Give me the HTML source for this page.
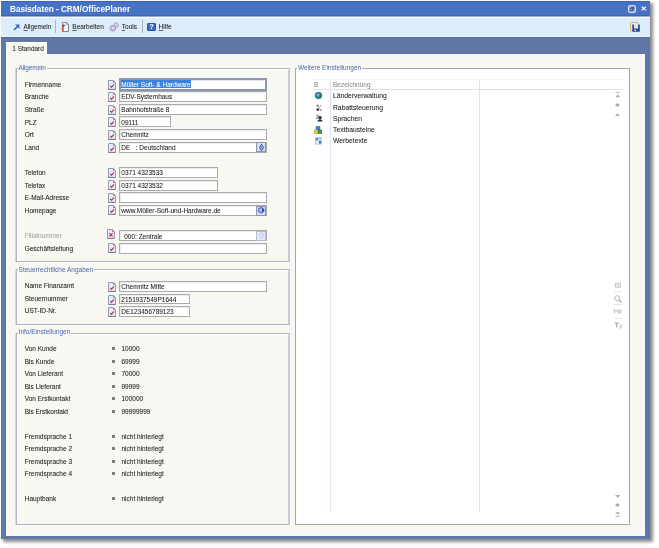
<!DOCTYPE html><html><head><meta charset="utf-8"><style>
html,body{margin:0;padding:0;background:#fff;width:659px;height:548px;overflow:hidden;font-family:"Liberation Sans",sans-serif;}
.a{position:absolute;box-sizing:border-box;}
.t{position:absolute;font-size:6.5px;line-height:8px;white-space:nowrap;color:#202020;-webkit-text-stroke:0.06px currentColor;}
.g{position:absolute;font-size:6.5px;line-height:8px;white-space:nowrap;color:#4867b0;background:#f8f7f1;padding:0 1px 0 1px;}
.in{position:absolute;box-sizing:border-box;background:#fff;border:1px solid #ababab;box-shadow:inset 1px 1px 0 #ececec;}
.gb{position:absolute;box-sizing:border-box;border:1px solid #b1b5c1;border-right-color:#bec4d1;box-shadow:inset 1px 1px 0 #fff, inset -1px 0 0 #c9ceda, 1px 1px 0 #fdfdfd, -1px 0 0 #d3d6dd;}
svg{position:absolute;overflow:visible;}
u{text-decoration-thickness:0.6px;text-underline-offset:1px;text-decoration-color:#666;}
#root{position:absolute;left:0;top:0;width:659px;height:548px;will-change:transform;}
</style></head><body><div id="root">
<div class="a" style="left:2.00px;top:2.00px;width:648.00px;height:537.00px;box-shadow:2px 2px 3px 1px rgba(0,0,0,0.45);"></div>
<div class="a" style="left:1.00px;top:1.00px;width:649.00px;height:538.00px;background:#5f78a7;"></div>
<div class="a" style="left:1.00px;top:1.00px;width:649.00px;height:15.00px;background:#4773c4;border-top:1px solid #3e62b4;border-bottom:1px solid #3f63b0;"></div>
<div class="a" style="left:10px;top:4px;font-size:8.2px;line-height:11px;font-weight:bold;color:#fff;white-space:nowrap;">Basisdaten - CRM/OfficePlaner</div>
<svg style="left:628.00px;top:5.00px" width="8" height="8" viewBox="0 0 8 8"><rect x="0.5" y="0.5" width="7" height="7" rx="1.3" fill="#9bb2e2" stroke="#d2def6" stroke-width="1"/><path d="M3.2 2.2H5.8V4.8" fill="none" stroke="#2c3f70" stroke-width="0.8"/><rect x="2.2" y="3.2" width="2.6" height="2.6" fill="none" stroke="#2c3f70" stroke-width="0.8"/></svg>
<svg style="left:640.50px;top:6.00px" width="5.5" height="5" viewBox="0 0 5.5 5"><path d="M0.6 0.6L4.9 4.4M4.9 0.6L0.6 4.4" stroke="#fff" stroke-width="1.25"/></svg>
<div class="a" style="left:1.00px;top:16.00px;width:649.00px;height:1.00px;background:#98aace;"></div>
<div class="a" style="left:1.00px;top:17.00px;width:649.00px;height:20.00px;background:#deedfc;border-top:1px solid #f6fbff;border-bottom:1px solid #f0f7fe;"></div>
<div class="a" style="left:1.00px;top:37.00px;width:649.00px;height:1.00px;background:#52699a;"></div>
<svg style="left:12.50px;top:23.50px" width="7" height="7" viewBox="0 0 7 7"><path d="M1 6L5.5 1.5" stroke="#3a62b4" stroke-width="1.6"/><path d="M2 0.5H6.5V5Z" fill="#3f69bd"/></svg>
<div class="t" style="left:23.50px;top:23.35px;color:#222;font-size:6.3px;"><u>A</u>llgemein</div>
<div class="a" style="left:55.00px;top:19.50px;width:1.00px;height:13.00px;background:#a9b4c6;"></div>
<svg style="left:61.00px;top:21.50px" width="8" height="10.5" viewBox="0 0 8 10.5"><path d="M1.5 0.5H5.5L7.5 2.5V9.5H1.5Z" fill="#f4f6fa" stroke="#6f7d95" stroke-width="0.9"/><path d="M5.5 0.5V2.5H7.5" fill="none" stroke="#6f7d95" stroke-width="0.7"/><path d="M0.8 3H2.8V8.8L1.8 10.3L0.8 8.8Z" fill="#c9603a"/><circle cx="2.8" cy="3.4" r="1" fill="#3a3a3a"/></svg>
<div class="t" style="left:72.30px;top:23.35px;color:#222;"><u>B</u>earbeiten</div>
<svg style="left:109.00px;top:22.00px" width="10.5" height="10" viewBox="0 0 10.5 10"><circle cx="7.2" cy="3" r="2.3" fill="#c9c2de" stroke="#a69dc4" stroke-width="1.1" stroke-dasharray="1 0.8"/><circle cx="7.2" cy="3" r="0.8" fill="#eeeaf6"/><circle cx="3.8" cy="6.2" r="2.9" fill="#c2bad9" stroke="#9d94bf" stroke-width="1.2" stroke-dasharray="1.1 0.9"/><circle cx="3.8" cy="6.2" r="1" fill="#efecf7"/></svg>
<div class="t" style="left:121.80px;top:23.35px;color:#222;"><u>T</u>ools</div>
<div class="a" style="left:141.50px;top:19.50px;width:1.00px;height:13.00px;background:#a9b4c6;"></div>
<div class="a" style="left:147.30px;top:22.60px;width:8.70px;height:8.40px;background:#3d6cc2;border-radius:1px;border:0.5px solid #2d55a0;"></div>
<div class="a" style="left:147.3px;top:22.4px;width:8.7px;text-align:center;font-size:7.5px;line-height:9px;font-weight:bold;color:#fff;">?</div>
<div class="t" style="left:158.60px;top:23.35px;color:#222;"><u>H</u>ilfe</div>
<svg style="left:630.00px;top:22.00px" width="10" height="10" viewBox="0 0 10 10"><rect x="0.5" y="0.5" width="7.6" height="8.6" rx="1" fill="none" stroke="#d4b35e" stroke-width="1"/><path d="M2.3 2.4H9.8V9.8H2.3Z" fill="#e6e2f6"/><path d="M2.3 2.4H4V9.8H2.3ZM8.1 2.4H9.8V9.8H8.1ZM4 6.6H8.1V9.8H4Z" fill="#2d4891"/><rect x="4.6" y="7.6" width="1.4" height="1.4" fill="#f2f2fa"/></svg>
<div class="a" style="left:6.00px;top:42.00px;width:41.00px;height:13.00px;background:#f8f7f1;border-top:1px solid #fff;border-left:1px solid #fff;"></div>
<div class="t" style="left:12.30px;top:44.55px;color:#222;font-size:6.45px;">1 Standard</div>
<div class="a" style="left:6.00px;top:54.00px;width:639.00px;height:482.00px;background:#f8f7f1;border-left:1px solid #fff;border-right:1px solid #fbfbfb;border-bottom:1px solid #fbfbfb;"></div>
<div class="gb" style="left:16.00px;top:68.00px;width:274.00px;height:194.00px;"></div>
<div class="g" style="left:17.60px;top:63.55px;font-size:6.5px;letter-spacing:-0.15px;">Allgemein</div>
<div class="gb" style="left:16.00px;top:269.00px;width:274.00px;height:56.00px;"></div>
<div class="g" style="left:17.60px;top:265.75px;">Steuerrechtliche Angaben</div>
<div class="gb" style="left:16.00px;top:333.00px;width:274.00px;height:192.00px;"></div>
<div class="g" style="left:17.60px;top:328.25px;">Info/Einstellungen</div>
<div class="t" style="left:24.70px;top:80.85px;">Firmenname</div>
<svg style="left:108.00px;top:79.60px" width="8" height="10" viewBox="0 0 8 10"><path d="M0.5 0.5H5.2L7.5 2.8V9.5H0.5Z" fill="#e9ecf8" stroke="#8593ad" stroke-width="0.9"/><path d="M5.2 0.5V2.8H7.5Z" fill="#66748f"/><path d="M0.5 9.4H7.5" stroke="#6b7891" stroke-width="0.9"/><path d="M2.3 5.9L3.5 7.3L5.9 4.4" fill="none" stroke="#c42a48" stroke-width="1.15"/></svg>
<div class="a" style="left:118.50px;top:78.00px;width:148.20px;height:13.00px;background:#fff;border:2px solid #8a97b3;box-shadow:inset 1px 1px 0 #dfe6f4;"></div>
<div class="a" style="left:121.00px;top:80.40px;width:69.80px;height:7.50px;background:#3b82da;"></div>
<div class="t" style="left:121.30px;top:80.75px;color:#fff;">Müller Soft- &amp; Hardware</div>
<div class="t" style="left:24.70px;top:93.45px;">Branche</div>
<svg style="left:108.00px;top:92.18px" width="8" height="10" viewBox="0 0 8 10"><path d="M0.5 0.5H5.2L7.5 2.8V9.5H0.5Z" fill="#e9ecf8" stroke="#8593ad" stroke-width="0.9"/><path d="M5.2 0.5V2.8H7.5Z" fill="#66748f"/><path d="M0.5 9.4H7.5" stroke="#6b7891" stroke-width="0.9"/><path d="M2.3 5.9L3.5 7.3L5.9 4.4" fill="none" stroke="#c42a48" stroke-width="1.15"/></svg>
<div class="in" style="left:118.50px;top:91.07px;width:148.20px;height:11.00px;"></div>
<div class="t" style="left:121.30px;top:93.42px;">EDV-Systemhaus</div>
<div class="t" style="left:24.70px;top:106.05px;">Straße</div>
<svg style="left:108.00px;top:104.76px" width="8" height="10" viewBox="0 0 8 10"><path d="M0.5 0.5H5.2L7.5 2.8V9.5H0.5Z" fill="#e9ecf8" stroke="#8593ad" stroke-width="0.9"/><path d="M5.2 0.5V2.8H7.5Z" fill="#66748f"/><path d="M0.5 9.4H7.5" stroke="#6b7891" stroke-width="0.9"/><path d="M2.3 5.9L3.5 7.3L5.9 4.4" fill="none" stroke="#c42a48" stroke-width="1.15"/></svg>
<div class="in" style="left:118.50px;top:103.74px;width:148.20px;height:11.00px;"></div>
<div class="t" style="left:121.30px;top:106.09px;">Bahnhofstraße 8</div>
<div class="t" style="left:24.70px;top:118.65px;">PLZ</div>
<svg style="left:108.00px;top:117.34px" width="8" height="10" viewBox="0 0 8 10"><path d="M0.5 0.5H5.2L7.5 2.8V9.5H0.5Z" fill="#e9ecf8" stroke="#8593ad" stroke-width="0.9"/><path d="M5.2 0.5V2.8H7.5Z" fill="#66748f"/><path d="M0.5 9.4H7.5" stroke="#6b7891" stroke-width="0.9"/><path d="M2.3 5.9L3.5 7.3L5.9 4.4" fill="none" stroke="#c42a48" stroke-width="1.15"/></svg>
<div class="in" style="left:118.50px;top:116.41px;width:52.10px;height:11.00px;"></div>
<div class="t" style="left:121.30px;top:118.76px;">09111</div>
<div class="t" style="left:24.70px;top:131.25px;">Ort</div>
<svg style="left:108.00px;top:129.92px" width="8" height="10" viewBox="0 0 8 10"><path d="M0.5 0.5H5.2L7.5 2.8V9.5H0.5Z" fill="#e9ecf8" stroke="#8593ad" stroke-width="0.9"/><path d="M5.2 0.5V2.8H7.5Z" fill="#66748f"/><path d="M0.5 9.4H7.5" stroke="#6b7891" stroke-width="0.9"/><path d="M2.3 5.9L3.5 7.3L5.9 4.4" fill="none" stroke="#c42a48" stroke-width="1.15"/></svg>
<div class="in" style="left:118.50px;top:129.08px;width:148.20px;height:11.00px;"></div>
<div class="t" style="left:121.30px;top:131.43px;">Chemnitz</div>
<div class="t" style="left:24.70px;top:143.85px;">Land</div>
<svg style="left:108.00px;top:142.50px" width="8" height="10" viewBox="0 0 8 10"><path d="M0.5 0.5H5.2L7.5 2.8V9.5H0.5Z" fill="#e9ecf8" stroke="#8593ad" stroke-width="0.9"/><path d="M5.2 0.5V2.8H7.5Z" fill="#66748f"/><path d="M0.5 9.4H7.5" stroke="#6b7891" stroke-width="0.9"/><path d="M2.3 5.9L3.5 7.3L5.9 4.4" fill="none" stroke="#c42a48" stroke-width="1.15"/></svg>
<div class="in" style="left:118.50px;top:141.75px;width:148.20px;height:11.00px;"></div>
<div class="a" style="left:256.20px;top:142.25px;width:10.00px;height:10.00px;background:#d0dcf8;border:1px solid #8c95ad;"></div>
<svg style="left:258.70px;top:143.75px" width="5" height="7" viewBox="0 0 5 7"><path d="M2.5 0.3L4.5 3.5L2.5 6.7L0.5 3.5Z" fill="#8fa7e0" stroke="#3552a0" stroke-width="0.9"/></svg>
<div class="t" style="left:121.30px;top:144.10px;">DE &nbsp;&nbsp;: Deutschland</div>
<div class="t" style="left:24.70px;top:169.05px;">Telefon</div>
<svg style="left:108.00px;top:167.66px" width="8" height="10" viewBox="0 0 8 10"><path d="M0.5 0.5H5.2L7.5 2.8V9.5H0.5Z" fill="#e9ecf8" stroke="#8593ad" stroke-width="0.9"/><path d="M5.2 0.5V2.8H7.5Z" fill="#66748f"/><path d="M0.5 9.4H7.5" stroke="#6b7891" stroke-width="0.9"/><path d="M2.3 5.9L3.5 7.3L5.9 4.4" fill="none" stroke="#c42a48" stroke-width="1.15"/></svg>
<div class="in" style="left:118.50px;top:167.09px;width:99.90px;height:11.00px;"></div>
<div class="t" style="left:121.30px;top:169.44px;">0371 4323533</div>
<div class="t" style="left:24.70px;top:181.65px;">Telefax</div>
<svg style="left:108.00px;top:180.24px" width="8" height="10" viewBox="0 0 8 10"><path d="M0.5 0.5H5.2L7.5 2.8V9.5H0.5Z" fill="#e9ecf8" stroke="#8593ad" stroke-width="0.9"/><path d="M5.2 0.5V2.8H7.5Z" fill="#66748f"/><path d="M0.5 9.4H7.5" stroke="#6b7891" stroke-width="0.9"/><path d="M2.3 5.9L3.5 7.3L5.9 4.4" fill="none" stroke="#c42a48" stroke-width="1.15"/></svg>
<div class="in" style="left:118.50px;top:179.76px;width:99.90px;height:11.00px;"></div>
<div class="t" style="left:121.30px;top:182.11px;">0371 4323532</div>
<div class="t" style="left:24.70px;top:194.25px;">E-Mail-Adresse</div>
<svg style="left:108.00px;top:192.82px" width="8" height="10" viewBox="0 0 8 10"><path d="M0.5 0.5H5.2L7.5 2.8V9.5H0.5Z" fill="#e9ecf8" stroke="#8593ad" stroke-width="0.9"/><path d="M5.2 0.5V2.8H7.5Z" fill="#66748f"/><path d="M0.5 9.4H7.5" stroke="#6b7891" stroke-width="0.9"/><path d="M2.3 5.9L3.5 7.3L5.9 4.4" fill="none" stroke="#c42a48" stroke-width="1.15"/></svg>
<div class="in" style="left:118.50px;top:192.43px;width:148.20px;height:11.00px;"></div>
<div class="t" style="left:24.70px;top:206.85px;">Homepage</div>
<svg style="left:108.00px;top:205.40px" width="8" height="10" viewBox="0 0 8 10"><path d="M0.5 0.5H5.2L7.5 2.8V9.5H0.5Z" fill="#e9ecf8" stroke="#8593ad" stroke-width="0.9"/><path d="M5.2 0.5V2.8H7.5Z" fill="#66748f"/><path d="M0.5 9.4H7.5" stroke="#6b7891" stroke-width="0.9"/><path d="M2.3 5.9L3.5 7.3L5.9 4.4" fill="none" stroke="#c42a48" stroke-width="1.15"/></svg>
<div class="in" style="left:118.50px;top:205.10px;width:148.20px;height:11.00px;"></div>
<div class="a" style="left:256.20px;top:205.60px;width:10.00px;height:10.00px;background:#d0dcf8;border:1px solid #8c95ad;"></div>
<svg style="left:258.00px;top:207.30px" width="7" height="6.5" viewBox="0 0 7 6.5"><circle cx="3" cy="3.25" r="2.7" fill="#7d9be6" stroke="#3e5cb0" stroke-width="0.8"/><path d="M4 0.9L6.8 3.25L4 5.6Z" fill="#2f4d9f"/><path d="M1.6 2.4H3.8M1.6 4.1H3.8" stroke="#d8e6ff" stroke-width="0.9"/></svg>
<div class="t" style="left:121.30px;top:207.45px;">www.Müller-Soft-und-Hardware.de</div>
<div class="t" style="left:24.70px;top:232.05px;color:#a4a4a4;">Filialnummer</div>
<svg style="left:107.20px;top:229.36px" width="8" height="10" viewBox="0 0 8 10"><path d="M0.5 0.5H5.2L7.5 2.8V9.5H0.5Z" fill="#e9ecf8" stroke="#8593ad" stroke-width="0.9"/><path d="M5.2 0.5V2.8H7.5Z" fill="#66748f"/><path d="M0.5 9.4H7.5" stroke="#6b7891" stroke-width="0.9"/><path d="M2.4 4.2L5.6 7.6M5.6 4.2L2.4 7.6" stroke="#d8283a" stroke-width="1.2"/></svg>
<div class="in" style="left:118.50px;top:230.44px;width:148.20px;height:11.00px;"></div>
<div class="a" style="left:256.20px;top:230.94px;width:10.00px;height:10.00px;background:#e2e9fb;border:1px solid #b3bbcf;"></div>
<svg style="left:258.70px;top:232.44px" width="5" height="7" viewBox="0 0 5 7"><path d="M2.5 0.3L4.5 3.5L2.5 6.7L0.5 3.5Z" fill="#dfe7fb" stroke="#b8c4e4" stroke-width="0.9"/></svg>
<div class="t" style="left:124.20px;top:232.79px;">000: Zentrale</div>
<div class="t" style="left:24.70px;top:244.65px;">Geschäftsleitung</div>
<svg style="left:108.00px;top:243.14px" width="8" height="10" viewBox="0 0 8 10"><path d="M0.5 0.5H5.2L7.5 2.8V9.5H0.5Z" fill="#e9ecf8" stroke="#8593ad" stroke-width="0.9"/><path d="M5.2 0.5V2.8H7.5Z" fill="#66748f"/><path d="M0.5 9.4H7.5" stroke="#6b7891" stroke-width="0.9"/><path d="M2.3 5.9L3.5 7.3L5.9 4.4" fill="none" stroke="#c42a48" stroke-width="1.15"/></svg>
<div class="in" style="left:118.50px;top:243.11px;width:148.20px;height:11.00px;"></div>
<div class="t" style="left:24.70px;top:282.15px;">Name Finanzamt</div>
<svg style="left:108.00px;top:282.20px" width="8" height="10" viewBox="0 0 8 10"><path d="M0.5 0.5H5.2L7.5 2.8V9.5H0.5Z" fill="#e9ecf8" stroke="#8593ad" stroke-width="0.9"/><path d="M5.2 0.5V2.8H7.5Z" fill="#66748f"/><path d="M0.5 9.4H7.5" stroke="#6b7891" stroke-width="0.9"/><path d="M2.3 5.9L3.5 7.3L5.9 4.4" fill="none" stroke="#c42a48" stroke-width="1.15"/></svg>
<div class="in" style="left:119.00px;top:281.00px;width:147.70px;height:10.50px;"></div>
<div class="t" style="left:121.30px;top:283.35px;">Chemnitz Mitte</div>
<div class="t" style="left:24.70px;top:294.65px;">Steuernummer</div>
<svg style="left:108.00px;top:294.70px" width="8" height="10" viewBox="0 0 8 10"><path d="M0.5 0.5H5.2L7.5 2.8V9.5H0.5Z" fill="#e9ecf8" stroke="#8593ad" stroke-width="0.9"/><path d="M5.2 0.5V2.8H7.5Z" fill="#66748f"/><path d="M0.5 9.4H7.5" stroke="#6b7891" stroke-width="0.9"/><path d="M2.3 5.9L3.5 7.3L5.9 4.4" fill="none" stroke="#c42a48" stroke-width="1.15"/></svg>
<div class="in" style="left:119.00px;top:293.50px;width:71.00px;height:10.50px;"></div>
<div class="t" style="left:121.30px;top:295.85px;">2151937549P1644</div>
<div class="t" style="left:24.70px;top:307.15px;">UST-ID-Nr.</div>
<svg style="left:108.00px;top:307.20px" width="8" height="10" viewBox="0 0 8 10"><path d="M0.5 0.5H5.2L7.5 2.8V9.5H0.5Z" fill="#e9ecf8" stroke="#8593ad" stroke-width="0.9"/><path d="M5.2 0.5V2.8H7.5Z" fill="#66748f"/><path d="M0.5 9.4H7.5" stroke="#6b7891" stroke-width="0.9"/><path d="M2.3 5.9L3.5 7.3L5.9 4.4" fill="none" stroke="#c42a48" stroke-width="1.15"/></svg>
<div class="in" style="left:119.00px;top:306.00px;width:71.00px;height:10.50px;"></div>
<div class="t" style="left:121.30px;top:308.35px;">DE123456789123</div>
<div class="t" style="left:24.70px;top:345.15px;">Von Kunde</div>
<div class="a" style="left:112.00px;top:347.00px;width:3.00px;height:3.00px;background:#7c7c7c;"></div>
<div class="t" style="left:121.50px;top:345.15px;">10000</div>
<div class="t" style="left:24.70px;top:357.65px;">Bis Kunde</div>
<div class="a" style="left:112.00px;top:360.00px;width:3.00px;height:3.00px;background:#7c7c7c;"></div>
<div class="t" style="left:121.50px;top:357.65px;">69999</div>
<div class="t" style="left:24.70px;top:370.15px;">Von Lieferant</div>
<div class="a" style="left:112.00px;top:372.00px;width:3.00px;height:3.00px;background:#7c7c7c;"></div>
<div class="t" style="left:121.50px;top:370.15px;">70000</div>
<div class="t" style="left:24.70px;top:382.65px;">Bis Lieferant</div>
<div class="a" style="left:112.00px;top:385.00px;width:3.00px;height:3.00px;background:#7c7c7c;"></div>
<div class="t" style="left:121.50px;top:382.65px;">99999</div>
<div class="t" style="left:24.70px;top:395.15px;">Von Erstkontakt</div>
<div class="a" style="left:112.00px;top:397.00px;width:3.00px;height:3.00px;background:#7c7c7c;"></div>
<div class="t" style="left:121.50px;top:395.15px;">100000</div>
<div class="t" style="left:24.70px;top:407.65px;">Bis Erstkontakt</div>
<div class="a" style="left:112.00px;top:410.00px;width:3.00px;height:3.00px;background:#7c7c7c;"></div>
<div class="t" style="left:121.50px;top:407.65px;">99999999</div>
<div class="t" style="left:24.70px;top:432.65px;">Fremdsprache 1</div>
<div class="a" style="left:112.00px;top:435.00px;width:3.00px;height:3.00px;background:#7c7c7c;"></div>
<div class="t" style="left:121.50px;top:432.65px;">nicht hinterlegt</div>
<div class="t" style="left:24.70px;top:445.15px;">Fremdsprache 2</div>
<div class="a" style="left:112.00px;top:447.00px;width:3.00px;height:3.00px;background:#7c7c7c;"></div>
<div class="t" style="left:121.50px;top:445.15px;">nicht hinterlegt</div>
<div class="t" style="left:24.70px;top:457.65px;">Fremdsprache 3</div>
<div class="a" style="left:112.00px;top:460.00px;width:3.00px;height:3.00px;background:#7c7c7c;"></div>
<div class="t" style="left:121.50px;top:457.65px;">nicht hinterlegt</div>
<div class="t" style="left:24.70px;top:470.15px;">Fremdsprache 4</div>
<div class="a" style="left:112.00px;top:472.00px;width:3.00px;height:3.00px;background:#7c7c7c;"></div>
<div class="t" style="left:121.50px;top:470.15px;">nicht hinterlegt</div>
<div class="t" style="left:24.70px;top:495.15px;">Hauptbank</div>
<div class="a" style="left:112.00px;top:497.00px;width:3.00px;height:3.00px;background:#7c7c7c;"></div>
<div class="t" style="left:121.50px;top:495.15px;">nicht hinterlegt</div>
<div class="a" style="left:295.00px;top:68.00px;width:335.00px;height:457.00px;background:#fff;border:1px solid #a9a6a0;"></div>
<div class="g" style="left:297.00px;top:64.05px;background:linear-gradient(#f8f7f1 0 4px,#fff 4px);">Weitere Einstellungen</div>
<div class="a" style="left:312.00px;top:79.00px;width:311.00px;height:1.00px;background:#f7f4ee;"></div>
<div class="a" style="left:312.00px;top:89.20px;width:311.00px;height:1.00px;background:#dfe2ee;"></div>
<div class="a" style="left:329.70px;top:79.00px;width:1.00px;height:432.50px;background:#dfe3f5;"></div>
<div class="a" style="left:478.60px;top:79.00px;width:1.00px;height:432.50px;background:#dfe3f5;"></div>
<div class="t" style="left:314.00px;top:81.15px;color:#8a8a8a;">B</div>
<div class="t" style="left:333.00px;top:81.15px;color:#8a8a8a;">Bezeichnung</div>
<div class="t" style="left:333.00px;top:92.45px;color:#1a1a1a;font-size:6.75px;-webkit-text-stroke:0.05px #1a1a1a;">Länderverwaltung</div>
<div class="t" style="left:333.00px;top:103.67px;color:#1a1a1a;font-size:6.75px;-webkit-text-stroke:0.05px #1a1a1a;">Rabattsteuerung</div>
<div class="t" style="left:333.00px;top:114.89px;color:#1a1a1a;font-size:6.75px;-webkit-text-stroke:0.05px #1a1a1a;">Sprachen</div>
<div class="t" style="left:333.00px;top:126.11px;color:#1a1a1a;font-size:6.75px;-webkit-text-stroke:0.05px #1a1a1a;">Textbausteine</div>
<div class="t" style="left:333.00px;top:137.33px;color:#1a1a1a;font-size:6.75px;-webkit-text-stroke:0.05px #1a1a1a;">Werbetexte</div>
<svg style="left:315.00px;top:92.00px" width="7" height="7" viewBox="0 0 7 7"><circle cx="3.5" cy="3.5" r="3.3" fill="#2a7f9a" stroke="#1d4a66" stroke-width="0.6"/><path d="M5.2 1Q7 3 6 5.8Q5 4 5.6 2.5Z" fill="#2f8a3a"/><circle cx="3" cy="3" r="1.4" fill="#7cc6dc" opacity="0.85"/></svg>
<svg style="left:316.00px;top:103.50px" width="6.5" height="7.5" viewBox="0 0 6.5 7.5"><circle cx="1.6" cy="1.8" r="1.2" fill="#8a8a8a"/><path d="M5.2 0.8L1.2 6.8" stroke="#999" stroke-width="0.9"/><circle cx="1.8" cy="5.6" r="1.3" fill="#3a3a3a"/><circle cx="4.7" cy="6" r="1.3" fill="#b0b0b0"/></svg>
<svg style="left:314.80px;top:114.00px" width="8" height="7.5" viewBox="0 0 8 7.5"><circle cx="2.5" cy="2" r="1.6" fill="#a8a8a8"/><path d="M0.5 5Q1 3.3 2.8 3.5L3.5 5Z" fill="#9a9a9a"/><circle cx="5" cy="3.6" r="1.7" fill="#1b2c4a"/><path d="M2.3 7.4Q2.8 5.2 5 5.2Q7.4 5.2 7.6 7.4Z" fill="#1d3254"/></svg>
<svg style="left:314.20px;top:126.00px" width="8" height="8" viewBox="0 0 8 8"><rect x="2" y="0.3" width="4" height="3.6" fill="#3d7fd0" stroke="#2a5a9a" stroke-width="0.4"/><rect x="0.3" y="3.9" width="3.9" height="3.8" fill="#e6d23a" stroke="#8a8a30" stroke-width="0.4"/><rect x="4" y="3.9" width="3.8" height="3.8" fill="#3a9a3a" stroke="#2a6a2a" stroke-width="0.4"/></svg>
<svg style="left:315.20px;top:137.00px" width="7" height="7.5" viewBox="0 0 7 7.5"><rect x="0.4" y="0.4" width="6.2" height="6.7" fill="#eef4f8" stroke="#9fb3c8" stroke-width="0.7"/><rect x="1" y="1.2" width="2.3" height="2.2" fill="#3f7fd0"/><rect x="3.8" y="1.2" width="2.2" height="2.2" fill="#a8d4c0"/><rect x="3.8" y="4.1" width="2.2" height="2.4" fill="#2f6fc0"/><rect x="1" y="4.1" width="2.3" height="2.4" fill="#dfe9f4"/></svg>
<svg style="left:614.50px;top:92.00px" width="5.5" height="5.5" viewBox="0 0 5.5 5.5"><path d="M0.5 0.6H5" stroke="#b0b0b0" stroke-width="0.9"/><path d="M0.3 5.2L2.75 2.2L5.2 5.2Z" fill="#b0b0b0"/></svg>
<svg style="left:614.80px;top:102.80px" width="5" height="4" viewBox="0 0 5 4"><path d="M2.5 0L5 2L2.5 4L0 2Z" fill="#b0b0b0"/></svg>
<svg style="left:614.80px;top:112.50px" width="5" height="3" viewBox="0 0 5 3"><path d="M0 3L2.5 0.2L5 3Z" fill="#b0b0b0"/></svg>
<svg style="left:613.50px;top:282.00px" width="8" height="6.5" viewBox="0 0 8 6.5"><path d="M2.2 0.5Q0.5 3.25 2.2 6M5.8 0.5Q7.5 3.25 5.8 6M4 0.5V6" fill="none" stroke="#b0b0b0" stroke-width="1"/></svg>
<div class="a" style="left:613.50px;top:290.60px;width:8.00px;height:0.80px;background:#e6e6e6;"></div>
<svg style="left:613.50px;top:294.50px" width="8" height="8" viewBox="0 0 8 8"><circle cx="3.2" cy="3.2" r="2.5" fill="none" stroke="#b0b0b0" stroke-width="0.9"/><path d="M5 5L7.5 7.5" stroke="#b0b0b0" stroke-width="1.3"/></svg>
<div class="a" style="left:613.50px;top:304.20px;width:8.00px;height:0.80px;background:#e6e6e6;"></div>
<svg style="left:613.50px;top:309.00px" width="8" height="5" viewBox="0 0 8 5"><path d="M0.5 4.5V0.5L2.2 2.5L3.9 0.5V4.5M5.2 0.5V4.5M6.8 0.5V4.5" fill="none" stroke="#b0b0b0" stroke-width="0.8"/></svg>
<div class="a" style="left:613.50px;top:317.80px;width:8.00px;height:0.80px;background:#e6e6e6;"></div>
<svg style="left:613.50px;top:321.50px" width="8" height="6.5" viewBox="0 0 8 6.5"><path d="M0.3 0.5H5L3.3 2.8V6L2 5V2.8Z" fill="#b0b0b0"/><path d="M5.5 3H8M5.5 4.5H8M5.5 6H8" stroke="#b0b0b0" stroke-width="0.7"/></svg>
<svg style="left:614.50px;top:494.80px" width="5.5" height="3" viewBox="0 0 5.5 3"><path d="M0 0L5.5 0L2.75 3Z" fill="#b0b0b0"/></svg>
<svg style="left:614.80px;top:503.30px" width="5" height="4" viewBox="0 0 5 4"><path d="M2.5 0L5 2L2.5 4L0 2Z" fill="#b0b0b0"/></svg>
<svg style="left:614.50px;top:512.00px" width="5.5" height="5" viewBox="0 0 5.5 5"><path d="M0.3 0.3L2.75 3L5.2 0.3Z" fill="#b0b0b0"/><path d="M0.5 4.4H5" stroke="#b0b0b0" stroke-width="0.9"/></svg>
</div></body></html>
